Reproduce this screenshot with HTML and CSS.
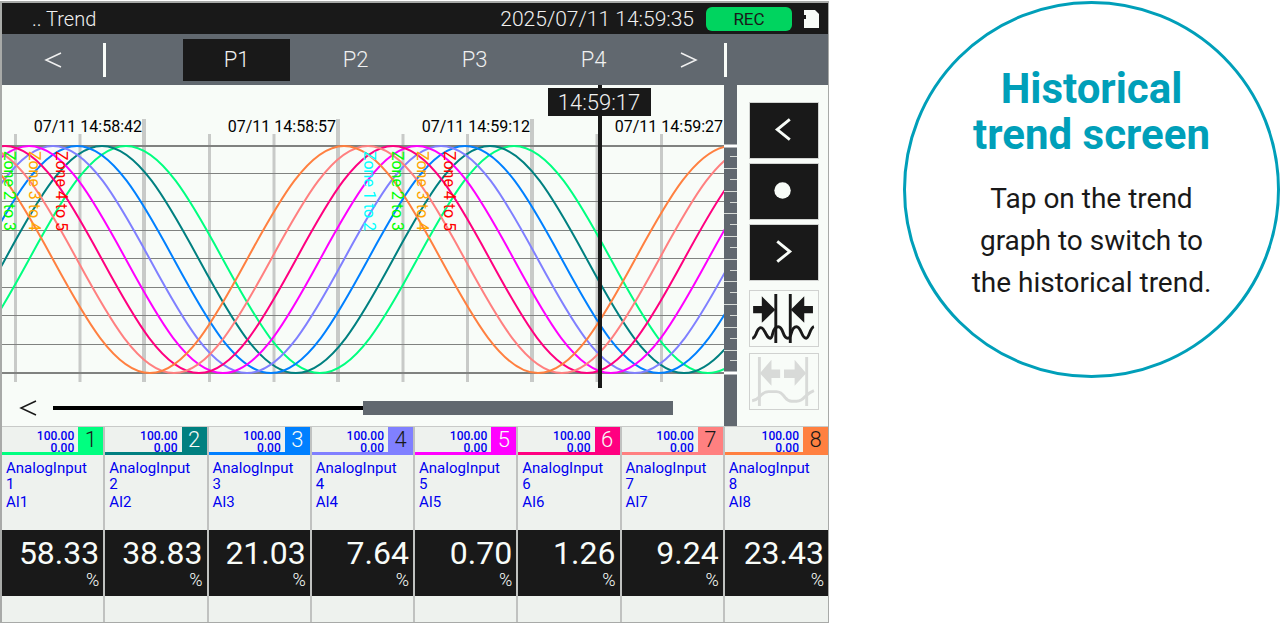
FILE: index.html
```html
<!DOCTYPE html>
<html lang="en">
<head>
  <meta charset="utf-8">
  <title>Historical trend screen</title>
  <link rel="stylesheet" href="styles.css">
</head>
<body>
  <main class="page">
    <section class="device">
      <header class="status-bar">
        <h1 class="screen-title">.. Trend</h1>
        <time class="clock">2025/07/11 14:59:35</time>
        <span class="rec">REC</span>
        <svg class="card-icon" viewBox="0 0 16 18" role="img" aria-label="SD card">
          <path d="M0 0h11l4 4v14H0V9h2V5H0z" fill="#f8fcf8"/>
        </svg>
      </header>

      <nav class="tabs">
        <button class="tab-arrow" aria-label="Previous page">
          <svg width="18" height="18" viewBox="0 0 18 18"><path d="M17 2L2 9l15 7"/></svg>
        </button>
        <span class="separator"></span>
        <span></span>
        <button class="tab active">P1</button>
        <button class="tab">P2</button>
        <button class="tab">P3</button>
        <button class="tab">P4</button>
        <button class="tab-arrow" aria-label="Next page">
          <svg width="18" height="18" viewBox="0 0 18 18"><path d="M1 2l15 7-15 7"/></svg>
        </button>
        <span class="separator"></span>
      </nav>

      <div class="trend">
        <div class="plot">
          <svg class="chart" viewBox="2 85 722 305">
            <defs>
              <!-- one sine wave, lowest point at x = 0, period 388 -->
              <path id="wave" d="M-388 373C-353 373-322.6 317.6-291 259.5S-229 146-194 146S-128.6 201.4-97 259.5S-35 373 0 373S65.4 317.6 97 259.5S159 146 194 146S259.4 201.4 291 259.5S353 373 388 373S453.4 317.6 485 259.5S547 146 582 146S647.4 201.4 679 259.5S741 373 776 373"/>
            </defs>
            <g class="grid-major">
              <path d="M144 119V382M338 119V382M532 119V382"/>
            </g>
            <g class="grid-minor">
              <path d="M15.500 134V382M80 134V382M209.500 134V382M274 134V382M403 134V382M467.500 134V382M597 134V382M661.500 134V382"/>
            </g>
            <g class="grid-level">
              <path d="M2 173.500H724M2 201.500H724M2 230.500H724M2 258.500H724M2 287.500H724M2 315.500H724M2 344.500H724"/>
              <path class="limit" d="M2 146H724M2 373H724"/>
            </g>
            <g class="time-labels">
              <text x="142" y="132">07/11 14:58:42</text>
              <text x="336" y="132">07/11 14:58:57</text>
              <text x="530" y="132">07/11 14:59:12</text>
              <text x="723" y="132">07/11 14:59:27</text>
            </g>
            <g class="waves">
              <use href="#wave" x="320" stroke="#00ff80"/>
              <use href="#wave" x="296" stroke="#008080"/>
              <use href="#wave" x="271" stroke="#0080ff"/>
              <use href="#wave" x="247" stroke="#8080ff"/>
              <use href="#wave" x="223" stroke="#ff00ff"/>
              <use href="#wave" x="199" stroke="#ff0080"/>
              <use href="#wave" x="174" stroke="#ff8080"/>
              <use href="#wave" x="150" stroke="#ff8040"/>
            </g>
            <g class="zones">
              <text transform="translate(4 151) rotate(90)" fill="#00ff00">Zone 2 to 3</text>
              <text transform="translate(29 151) rotate(90)" fill="#ffa500">Zone 3 to 4</text>
              <text transform="translate(56 151) rotate(90)" fill="#ff0000">Zone 4 to 5</text>
              <text transform="translate(364 151) rotate(90)" fill="#00ffff">Zone 1 to 2</text>
              <text transform="translate(392 151) rotate(90)" fill="#00ff00">Zone 2 to 3</text>
              <text transform="translate(417 151) rotate(90)" fill="#ffa500">Zone 3 to 4</text>
              <text transform="translate(444 151) rotate(90)" fill="#ff0000">Zone 4 to 5</text>
            </g>
            <g class="cursor">
              <rect x="598" y="85" width="4" height="303"/>
              <rect x="548" y="88" width="103" height="28"/>
              <text x="599" y="110">14:59:17</text>
            </g>
          </svg>
          <div class="scroll-row">
            <button class="scroll-back" aria-label="Older data">
              <svg width="18" height="18" viewBox="0 0 18 18"><path d="M17 2L2 9l15 7"/></svg>
            </button>
            <input class="scroll" type="range" min="0" max="100" value="100" aria-label="Time position">
          </div>
        </div>

        <svg class="scale" viewBox="0 0 13 341">
          <path class="half" d="M6 71.500h7M6 94.500h7M6 117.500h7M6 139.500h7M6 162.500h7M6 185.500h7M6 207.500h7M6 230.500h7M6 253.500h7M6 275.500h7"/>
          <path class="full" d="M0 83.500h13M0 106.500h13M0 128.500h13M0 151.500h13M0 174.500h13M0 196.500h13M0 219.500h13M0 242.500h13M0 265.500h13"/>
          <path class="end" d="M0 61h13M0 288h13"/>
        </svg>

        <div class="tools">
          <button class="tool dark" aria-label="Move cursor left">
            <svg viewBox="0 0 70 57"><path d="M41 17L28 27.500 41 38"/></svg>
          </button>
          <button class="tool dark" aria-label="Centre cursor">
            <svg viewBox="0 0 70 57"><circle cx="33.500" cy="27.500" r="8.500"/></svg>
          </button>
          <button class="tool dark" aria-label="Move cursor right">
            <svg viewBox="0 0 70 57"><path d="M28 17l13 10.500L28 38"/></svg>
          </button>
          <button class="tool zoom-out" aria-label="Compress time axis">
            <svg viewBox="0 0 70 57">
              <path class="line" d="M26.500 3v51M41.500 3v51"/>
              <path class="arrow" d="M3 15.500h9V5.500l14 14-14 13.500v-10H3zM65 15.500h-9V5.500l-14 14 14 13.500v-10h9z"/>
              <path class="line" d="M2 49C4 49 6 45 7 42Q11 34 15 42C18 47 18 49 21 49C24 49 22 37 29 37C35 37 33 49 39 49C44 49 41 37 48 37C53 37 53 49 58 49C61 49 62 38 66 37"/>
            </svg>
          </button>
          <button class="tool zoom-in" aria-label="Expand time axis" disabled>
            <svg viewBox="0 0 70 57">
              <path class="line" d="M9.500 3v51M58.500 3v51"/>
              <path class="arrow" d="M10 20l12-14v10h9v9h-9v8zM58 20L46 6v10H35v9h11v8z"/>
              <path class="line" d="M2 48.500Q6 48 10 44Q14 39 19 39H27Q32 39 36 45Q39 49 43 49H48Q53 49 57 44Q61 40 66 38"/>
            </svg>
          </button>
        </div>
      </div>

      <div class="channels">
        <article class="channel ch1">
          <div class="channel-head">
            <div class="range">100.00<br>0.00</div>
            <span class="badge">1</span>
          </div>
          <div class="channel-name">AnalogInput<br>1</div>
          <div class="channel-tag">AI1</div>
          <div class="reading">58.33<span class="unit">%</span></div>
        </article>
        <article class="channel ch2">
          <div class="channel-head">
            <div class="range">100.00<br>0.00</div>
            <span class="badge">2</span>
          </div>
          <div class="channel-name">AnalogInput<br>2</div>
          <div class="channel-tag">AI2</div>
          <div class="reading">38.83<span class="unit">%</span></div>
        </article>
        <article class="channel ch3">
          <div class="channel-head">
            <div class="range">100.00<br>0.00</div>
            <span class="badge">3</span>
          </div>
          <div class="channel-name">AnalogInput<br>3</div>
          <div class="channel-tag">AI3</div>
          <div class="reading">21.03<span class="unit">%</span></div>
        </article>
        <article class="channel ch4">
          <div class="channel-head">
            <div class="range">100.00<br>0.00</div>
            <span class="badge">4</span>
          </div>
          <div class="channel-name">AnalogInput<br>4</div>
          <div class="channel-tag">AI4</div>
          <div class="reading">7.64<span class="unit">%</span></div>
        </article>
        <article class="channel ch5">
          <div class="channel-head">
            <div class="range">100.00<br>0.00</div>
            <span class="badge">5</span>
          </div>
          <div class="channel-name">AnalogInput<br>5</div>
          <div class="channel-tag">AI5</div>
          <div class="reading">0.70<span class="unit">%</span></div>
        </article>
        <article class="channel ch6">
          <div class="channel-head">
            <div class="range">100.00<br>0.00</div>
            <span class="badge">6</span>
          </div>
          <div class="channel-name">AnalogInput<br>6</div>
          <div class="channel-tag">AI6</div>
          <div class="reading">1.26<span class="unit">%</span></div>
        </article>
        <article class="channel ch7">
          <div class="channel-head">
            <div class="range">100.00<br>0.00</div>
            <span class="badge">7</span>
          </div>
          <div class="channel-name">AnalogInput<br>7</div>
          <div class="channel-tag">AI7</div>
          <div class="reading">9.24<span class="unit">%</span></div>
        </article>
        <article class="channel ch8">
          <div class="channel-head">
            <div class="range">100.00<br>0.00</div>
            <span class="badge">8</span>
          </div>
          <div class="channel-name">AnalogInput<br>8</div>
          <div class="channel-tag">AI8</div>
          <div class="reading">23.43<span class="unit">%</span></div>
        </article>
      </div>
    </section>

    <aside class="callout">
      <h2>Historical<br>trend screen</h2>
      <p>Tap on the trend<br>graph to switch to<br>the historical trend.</p>
    </aside>
  </main>
</body>
</html>
```
FILE: styles.css
```css
* {
  box-sizing: border-box;
}

body {
  margin: 0;
  font-family: Roboto, "Liberation Sans", sans-serif;
  background: #fff;
  color: #191919;
}

button {
  padding: 0;
  border: none;
  background: none;
  color: inherit;
  font: inherit;
  cursor: pointer;
}

svg {
  display: block;
}

.page {
  display: grid;
  grid-template-columns: 829fr 451fr;
  align-items: start;
}

.device {
  margin-top: 1px;
  border: 2px solid #a8aaa8;
  border-right-width: 1px;
  border-bottom-width: 1px;
  background: #f8fcf8;
}

/* status bar */
.status-bar {
  display: flex;
  align-items: center;
  height: 31px;
  padding: 0 8px 0 30px;
  background: #191919;
  color: #f0f0f0;
}

.screen-title {
  flex: 1;
  margin: 0;
  font-size: 20px;
  font-weight: 300;
}

.clock {
  font-size: 21px;
  font-weight: 300;
}

.rec {
  width: 86px;
  margin: 0 12px;
  border-radius: 6px;
  background: #00d45f;
  color: #191919;
  font-size: 17px;
  line-height: 24px;
  text-align: center;
}

.card-icon {
  width: 16px;
  height: 18px;
}

/* page tabs */
.tabs {
  display: grid;
  grid-template-columns: 101fr 3px 71fr repeat(4, 119fr) 71fr 3px 101fr;
  align-items: center;
  height: 51px;
  background: #61686f;
  color: #f0f0f0;
}

.tab {
  height: 42px;
  margin: 0 6px;
  font-size: 22px;
  font-weight: 300;
}

.tab.active {
  background: #191919;
}

.tab-arrow,
.scroll-back {
  display: flex;
  justify-content: center;
}

.tab-arrow path,
.scroll-back path {
  fill: none;
  stroke: currentColor;
  stroke-width: 1.5;
}

.separator {
  height: 34px;
  background: #f8fcf8;
}

/* trend area */
.trend {
  display: grid;
  grid-template-columns: 722fr 13fr 91fr;
}

.chart {
  width: 100%;
}

.grid-major {
  stroke: #c8cac8;
  stroke-width: 4;
}

.grid-minor {
  stroke: #c8cac8;
  stroke-width: 3;
}

.grid-level {
  stroke: #808280;
  stroke-width: 1;
}

.limit {
  stroke-width: 2;
}

.time-labels {
  font-size: 16px;
  text-anchor: end;
}

.zones {
  font-size: 16px;
}

.waves {
  fill: none;
  stroke-width: 2;
}

.cursor {
  fill: #191919;
}

.cursor text {
  fill: #f0f0f0;
  font-size: 22px;
  font-weight: 300;
  text-anchor: middle;
}

.scroll-row {
  display: flex;
  align-items: center;
  height: 36px;
  padding-right: 51px;
}

.scroll-back {
  flex: 0 0 51px;
}

.scroll {
  flex: 1;
  min-width: 0;
  height: 14px;
  margin: 0;
  appearance: none;
  background: linear-gradient(#000, #000) center / 100% 4px no-repeat;
}

.scroll::-webkit-slider-thumb {
  appearance: none;
  width: 310px;
  height: 14px;
  background: #61686f;
}

.scale {
  width: 100%;
  height: 100%;
  background: #61686f;
}

.scale path {
  stroke: #d8dcd8;
}

.scale .end {
  stroke: #fff;
  stroke-width: 3;
}

.tools {
  display: flex;
  flex-direction: column;
  gap: 4px;
  padding: 17px 9px 0 12px;
}

.tool {
  height: 57px;
  border: 1px solid #d0d2d0;
}

.tool svg {
  width: 100%;
  height: 100%;
}

.tool.dark {
  background: #191919;
}

.dark path {
  fill: none;
  stroke: #f8fcf8;
  stroke-width: 3;
}

.dark circle {
  fill: #f8fcf8;
}

.zoom-out {
  margin-top: 5px;
  color: #191919;
}

.zoom-in {
  margin-top: 2px;
  color: #d8dad8;
}

.tool .line {
  fill: none;
  stroke: currentColor;
  stroke-width: 3;
}

.tool .arrow {
  fill: currentColor;
}

/* channel readings */
.channels {
  display: grid;
  grid-template-columns: repeat(8, 1fr);
  border-top: 1px solid #c8cac8;
}

.channel {
  padding-bottom: 26px;
  border-right: 2px solid #c0c2c0;
  background: #eef2ee;
  color: #0000f0;
}

.channel:last-child {
  border-right: none;
}

.channel-head {
  display: flex;
  justify-content: flex-end;
  height: 28px;
  border-bottom: 3px solid var(--pen);
}

.range {
  padding: 3px 4px 0 0;
  font-size: 12px;
  font-weight: 500;
  line-height: 12px;
  text-align: right;
}

.badge {
  width: 25px;
  background: var(--pen);
  color: var(--digit, #191919);
  font-size: 22px;
  font-weight: 300;
  line-height: 26px;
  text-align: center;
}

.channel-name {
  padding: 5px 0 0 4px;
  font-size: 15px;
  line-height: 16px;
}

.channel-tag {
  height: 38px;
  padding: 2px 0 0 4px;
  font-size: 15px;
  line-height: 16px;
}

.reading {
  height: 66px;
  padding: 6px 4px 0 0;
  background: #191919;
  color: #f8fcf8;
  font-size: 32px;
  line-height: 34px;
  text-align: right;
}

.unit {
  display: block;
  font-size: 18px;
  font-weight: 300;
  line-height: 20px;
}

.ch1 { --pen: #00ff80; }
.ch2 { --pen: #008080; --digit: #f8fcf8; }
.ch3 { --pen: #0080ff; --digit: #f8fcf8; }
.ch4 { --pen: #8080ff; }
.ch5 { --pen: #ff00ff; --digit: #f8fcf8; }
.ch6 { --pen: #ff0080; --digit: #f8fcf8; }
.ch7 { --pen: #ff8080; }
.ch8 { --pen: #ff8040; }

/* round note beside the screen */
.callout {
  aspect-ratio: 1;
  margin: 1px 0 0 74px;
  padding-top: 62px;
  border: 3px solid #009fb9;
  border-radius: 50%;
  text-align: center;
}

.callout h2 {
  margin: 0 0 20px;
  color: #009fb9;
  font-size: 42px;
  font-weight: 700;
  line-height: 46px;
}

.callout p {
  margin: 0;
  font-size: 28px;
  line-height: 42px;
}
```
